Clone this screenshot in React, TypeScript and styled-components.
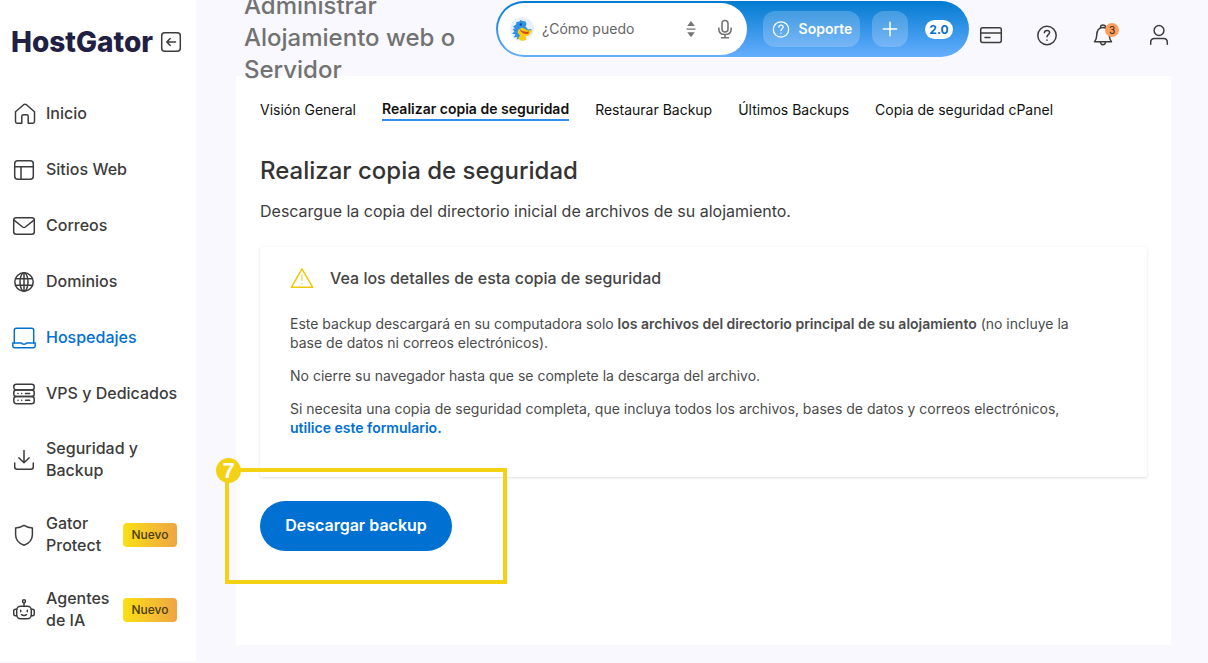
import React from 'react';
import styled, { createGlobalStyle, css } from 'styled-components';

const GlobalStyle = createGlobalStyle`
  * { box-sizing: border-box; }
  body {
    margin: 0;
    background: #f8f8fe;
    color: #3c3c3c;
    font-family: Inter, "Liberation Sans", sans-serif;
    font-size: 16px;
  }
  h1, h2, h3, p, ul { margin: 0; padding: 0; }
  button { font-family: inherit; border: 0; padding: 0; background: none; cursor: pointer; }
`;

const Shell = styled.div`
  display: grid;
  grid-template-columns: 196px minmax(0, 1fr);
  min-height: 100vh;
  overflow: hidden;
`;

const Sidebar = styled.aside`
  background: #fff;
  border-bottom: 1px solid #f3f4f8;
`;

const Brand = styled.div`
  display: flex;
  align-items: center;
  gap: 6px;
  height: 86px;
  padding: 0 0 3px 11px;
`;

const Logo = styled.a`
  color: #1f2044;
  font-size: 28px;
  line-height: 32px;
  font-weight: 800;
  text-decoration: none;
`;

const CollapseButton = styled.button`
  display: flex;
  color: #3c3c3c;
`;

const Menu = styled.ul`
  list-style: none;
`;

const MenuLink = styled.a<{ $active?: boolean; $tall?: boolean }>`
  display: flex;
  align-items: center;
  gap: 10px;
  min-height: ${(p) => (p.$tall ? 75 : 56)}px;
  padding-left: 12px;
  color: ${(p) => (p.$active ? '#0070d2' : '#3c3c3c')};
  font-size: 16px;
  line-height: 22px;
  font-weight: 500;
  text-decoration: none;
  svg { flex: none; }
`;

const MenuLabel = styled.span`
  flex: 1;
  max-width: 140px;
  padding-bottom: 2px;
`;

const NewTag = styled.span`
  width: 54px;
  margin-right: 19px;
  border-radius: 4px;
  background: linear-gradient(90deg, #fae014, #efa544);
  color: #4a3b0a;
  font-size: 12px;
  line-height: 24px;
  text-align: center;
`;

const Content = styled.div`
  display: flex;
  flex-direction: column;
  min-width: 0;
`;

const Header = styled.header`
  position: relative;
  z-index: 1;
  display: flex;
  align-items: center;
  height: 76px;
  padding: 0 37px 0 48px;
`;

const PageTitle = styled.h1`
  flex: 1;
  padding-right: 24px;
  color: #727272;
  font-size: 24px;
  line-height: 32px;
  font-weight: 500;
`;

const Assistant = styled.div`
  display: flex;
  align-self: flex-start;
  align-items: center;
  width: 473px;
  height: 56px;
  margin-top: 1px;
  padding-left: 2px;
  border-radius: 28px;
  background: linear-gradient(180deg, #027bd0, #66aeff);
`;

const Ask = styled.label`
  display: flex;
  align-items: center;
  width: 249px;
  height: 52px;
  padding: 0 14px 0 12px;
  border-radius: 26px;
  background: #fff;
  color: #757575;
  svg { flex: none; }
`;

const AskInput = styled.input`
  flex: 1;
  min-width: 0;
  margin-left: 8px;
  padding: 0;
  border: 0;
  outline: 0;
  background: none;
  color: #666;
  font: 400 14px/20px Inter, "Liberation Sans", sans-serif;
  &::placeholder { color: #666; opacity: 1; }
`;

const MicButton = styled.button`
  display: flex;
  margin-left: 19px;
  color: #757575;
`;

const GlassButton = styled.button<{ $icon?: boolean }>`
  display: flex;
  align-items: center;
  justify-content: center;
  gap: 8px;
  width: ${(p) => (p.$icon ? 36 : 97)}px;
  height: 36px;
  margin-left: ${(p) => (p.$icon ? 12 : 16)}px;
  border-radius: 12px;
  background: rgba(255, 255, 255, 0.2);
  color: #fff;
  font-size: 14px;
  line-height: 20px;
  font-weight: 600;
`;

const Version = styled.span`
  width: 28px;
  margin-left: 17px;
  border-radius: 10px;
  background: #fff;
  color: #0b6fc4;
  font-size: 12px;
  line-height: 19px;
  font-weight: 700;
  text-align: center;
`;

const HeaderActions = styled.nav`
  display: flex;
  gap: 32px;
  margin-left: 10px;
`;

const IconButton = styled.button`
  position: relative;
  display: flex;
  color: #3c3c3c;
  padding-bottom: 6px;
`;

const Count = styled.span`
  position: absolute;
  top: 0;
  right: -4px;
  width: 14px;
  border-radius: 7px;
  background: #ff9d5c;
  color: #222;
  font-size: 10px;
  line-height: 14px;
  text-align: center;
`;

const Panel = styled.main`
  flex: 1;
  margin: 0 37px 18px 40px;
  padding: 23px 24px 48px;
  background: #fff;
`;

const Tabs = styled.nav`
  display: flex;
  gap: 26px;
`;

const Tab = styled.a<{ $active?: boolean }>`
  padding-top: 1px;
  color: #111;
  font-size: 14px;
  line-height: 20px;
  text-decoration: none;
  white-space: nowrap;
  ${(p) => p.$active && css`
    padding-top: 0;
    border-bottom: 2px solid #2f8fea;
    font-weight: 600;
  `}
`;

const Heading = styled.h2`
  margin-top: 34px;
  color: #333;
  font-size: 24px;
  line-height: 32px;
  font-weight: 500;
`;

const Lead = styled.p`
  margin-top: 12px;
  line-height: 24px;
`;

const Card = styled.section`
  margin-top: 24px;
  padding: 19px 30px 40px;
  border-radius: 2px;
  box-shadow: 0 1px 3px rgba(0, 0, 0, 0.13);
`;

const CardTitle = styled.h3`
  display: flex;
  align-items: center;
  gap: 16px;
  margin-bottom: 24px;
  color: #444;
  font-size: 16px;
  line-height: 24px;
  font-weight: 500;
`;

const Note = styled.p`
  max-width: 810px;
  margin-bottom: 14px;
  color: #4b4b4b;
  font-size: 14px;
  line-height: 19px;
  &:last-child { margin-bottom: 0; }
  strong { font-weight: 600; }
`;

const NoteLink = styled.a`
  color: #0070d2;
  font-weight: 600;
  text-decoration: none;
`;

const Action = styled.div`
  position: relative;
  display: inline-block;
  margin-top: 24px;
`;

const PrimaryButton = styled.button`
  width: 192px;
  height: 50px;
  padding-bottom: 2px;
  border-radius: 25px;
  background: #0070d2;
  color: #fff;
  font-size: 16px;
  font-weight: 600;
`;

const Highlight = styled.div`
  position: absolute;
  inset: -33px -55px -33px -35px;
  border: 4px solid #f3d114;
  pointer-events: none;
`;

const Step = styled.span`
  position: absolute;
  top: -14px;
  left: -13px;
  width: 25px;
  border-radius: 50%;
  background: #f3d114;
  color: #fff;
  font: 700 22px/25px "Liberation Sans", sans-serif;
  text-align: center;
`;

type IconProps = { children: React.ReactNode; size?: number; stroke?: number; color?: string };

const Icon = ({ children, size = 24, stroke = 1.5, color = 'currentColor' }: IconProps) => (
  <svg width={size} height={size} viewBox="0 0 24 24" fill="none" stroke={color} strokeWidth={stroke}
    strokeLinecap="round" strokeLinejoin="round" aria-hidden="true">
    {children}
  </svg>
);

const icons = {
  home: <path d="M3.500 9.800 11.600 2.700Q13 1.700 14.400 2.700L22.500 9.800V19.500Q22.500 21.200 20.800 21.200H16.200V14.300Q16.200 12.700 14.600 12.700H11.400Q9.800 12.700 9.800 14.300V21.200H5.200Q3.500 21.200 3.500 19.500Z" />,
  sites: <><rect x="2.700" y="2.700" width="18.600" height="18.600" rx="3" /><path d="M2.700 8.800H21.300M9 8.800V21.300" /></>,
  mail: <><rect x="1.700" y="3.700" width="20.600" height="16.500" rx="2.500" /><path d="m2.300 6.300 8.300 6.700q1.400 1 2.800 0l8.300-6.700" /></>,
  globe: <><circle cx="12" cy="12" r="9.200" /><ellipse cx="12" cy="12" rx="4" ry="9.200" /><path d="M3.600 8.800h16.800M3.600 15.200h16.800M12 2.800v18.400" /></>,
  hosting: <><path d="M2.300 16.700V4.300q0-2 2-2h15.400q2 0 2 2v12.400" /><path d="M.8 16.900h8.600q.6 1.300 2.600 1.300t2.600-1.300h8.600v3.200q0 1.700-1.700 1.700h-19Q.8 21.800.8 20.100Z" /></>,
  servers: <><rect x="1.800" y="2.300" width="20.400" height="5.700" rx="2.500" /><rect x="1.800" y="8" width="20.400" height="6.600" rx="2.500" /><rect x="1.800" y="14.600" width="20.400" height="7.200" rx="2.500" /><path d="M6 11.400h.1M9.600 11.400h.1M13.500 11.400h4.200M6 18.300h.1M9.600 18.300h.1M13.500 18.300h4.200" /></>,
  download: <path d="M12 2.500v12.200M6.800 9.800l5.200 5 5.200-5M2.700 15v3.700q0 2.500 2.500 2.500h13.600q2.500 0 2.500-2.500V15" />,
  shield: <path d="M12 2.300Q16 4.800 20.400 5V11.500C20.400 17 16.800 20.500 12 22.200 7.200 20.500 3.600 17 3.600 11.500V5Q8 4.800 12 2.300Z" />,
  robot: <><circle cx="12" cy="3.200" r="1.500" /><path d="M12 4.800v3.400M4.700 11.200H3.500q-1.800 0-1.800 2v2.600q0 2 1.800 2h1.200M19.300 11.200h1.200q1.800 0 1.800 2v2.600q0 2-1.800 2h-1.200M8.700 12.300v1.400M15.300 12.300v1.400M9.400 16.700q2.600 1.700 5.200 0" /><rect x="4.700" y="8.200" width="14.600" height="12.600" rx="4" /></>,
  collapse: <><rect x="2.700" y="2.700" width="18.600" height="18.600" rx="3" /><path d="M16.500 12H8M11.200 8.500 7.800 12l3.400 3.500" /></>,
  card: <><rect x="1.700" y="4.700" width="20.600" height="14.800" rx="2" /><path d="M1.700 10h20.600M6 14.400h5" /></>,
  help: <><circle cx="12" cy="12.500" r="9.200" /><path d="M9.400 9.800q.1-2.400 2.600-2.400t2.600 2.200c0 2-2.600 2-2.600 4.200M12 17v.2" /></>,
  bell: <><path d="M9.600 4.600V3.800q0-1.800 2.400-1.800t2.400 1.800v.8M3.500 18.700H20.500C19 17 18.400 16 18.300 12.500 18.200 7.500 16.500 4.600 12 4.600S5.800 7.500 5.700 12.500C5.600 16 5 17 3.500 18.700Z" /><path d="M9.500 19q.2 2.700 2.500 2.700t2.500-2.700" /></>,
  user: <><circle cx="12" cy="7.500" r="4.900" /><path d="M3.700 21.300v-2q0-3.800 3.800-3.800h9q3.800 0 3.800 3.800v2" /></>,
  warning: <><path d="M12 2.900 22.700 21.300H1.300Z" /><path d="M12 9.300v5M12 17.500v.2" strokeOpacity=".65" /></>,
  plus: <path d="M12 4v16M4 12h16" />,
};

const Mascot = () => (
  <svg width="24" height="24" viewBox="0 0 24 24" aria-hidden="true">
    <circle cx="12" cy="12" r="12" fill="#e8f0fd" />
    <path d="M3 9.500 6 7.500 6.500 5 9 4.800 10.500 3 12.500 4 15.500 4.500 16.500 7 15.500 9.500 18 12.500 21.500 12 21 15 14 18.500 10 21.500 6.500 22.500 7.500 20 3.500 20.500 5.500 17.500 2 16.500 4.500 14.500 2.500 12 5 11.500Z" fill="#2f92e6" />
    <path d="M8.500 12.500 12 10.500 18.500 13.800 21.500 12.500 21.800 15 19 18.500 15.500 19.500 16.500 22.500 12.500 24 8 22 10 18.500 7.500 15.500Z" fill="#fccc14" />
    <path d="M9.500 12Q13 15.800 19 14.500L18.500 16.800Q12 18 9.500 12Z" fill="#d44a1e" />
    <circle cx="10.800" cy="7.500" r="1.200" fill="#17457d" />
  </svg>
);

const Stepper = () => (
  <svg width="14" height="20" viewBox="0 0 14 20" fill="#757575" aria-hidden="true">
    <path d="M3.200 7 7 2l3.800 5ZM3.200 13.200h7.600L7 18.200ZM2.500 9.600h9v1.100h-9Z" />
  </svg>
);

const MicIcon = () => (
  <svg width="16" height="20" viewBox="0 0 16 20" fill="none" stroke="currentColor" strokeWidth="1.600" aria-hidden="true">
    <rect x="5" y="1.500" width="6" height="11.500" rx="3" />
    <path d="M1.800 8.500v1.200Q1.800 15.500 8 15.500t6.200-5.800V8.500M8 15.500V18.800M4 18.800h8" />
  </svg>
);

const menu = [
  { label: 'Inicio', icon: icons.home },
  { label: 'Sitios Web', icon: icons.sites },
  { label: 'Correos', icon: icons.mail },
  { label: 'Dominios', icon: icons.globe },
  { label: 'Hospedajes', icon: icons.hosting, active: true },
  { label: 'VPS y Dedicados', icon: icons.servers },
  { label: 'Seguridad y Backup', icon: icons.download, tall: true },
  { label: 'Gator Protect', icon: icons.shield, tall: true, isNew: true },
  { label: 'Agentes de IA', icon: icons.robot, tall: true, isNew: true },
];

const tabs = ['Visión General', 'Realizar copia de seguridad', 'Restaurar Backup', 'Últimos Backups', 'Copia de seguridad cPanel'];

export default function App() {
  return (
    <>
      <GlobalStyle />
      <Shell>
        <Sidebar>
          <Brand>
            <Logo href="#inicio">HostGator</Logo>
            <CollapseButton aria-label="Contraer menú"><Icon>{icons.collapse}</Icon></CollapseButton>
          </Brand>
          <Menu>
            {menu.map((item) => (
              <li key={item.label}>
                <MenuLink href="#menu" $active={item.active} $tall={item.tall}>
                  <Icon>{item.icon}</Icon>
                  <MenuLabel>{item.label}</MenuLabel>
                  {item.isNew && <NewTag>Nuevo</NewTag>}
                </MenuLink>
              </li>
            ))}
          </Menu>
        </Sidebar>
        <Content>
          <Header>
            <PageTitle>Administrar Alojamiento web o Servidor</PageTitle>
            <Assistant>
              <Ask>
                <Mascot />
                <AskInput placeholder="¿Cómo puedo" aria-label="Pregunta" />
                <Stepper />
                <MicButton aria-label="Dictar"><MicIcon /></MicButton>
              </Ask>
              <GlassButton><Icon size={20}>{icons.help}</Icon>Soporte</GlassButton>
              <GlassButton $icon aria-label="Agregar"><Icon size={20} stroke={1.8}>{icons.plus}</Icon></GlassButton>
              <Version>2.0</Version>
            </Assistant>
            <HeaderActions>
              <IconButton aria-label="Pagos"><Icon>{icons.card}</Icon></IconButton>
              <IconButton aria-label="Ayuda"><Icon>{icons.help}</Icon></IconButton>
              <IconButton aria-label="Notificaciones"><Icon>{icons.bell}</Icon><Count>3</Count></IconButton>
              <IconButton aria-label="Cuenta"><Icon>{icons.user}</Icon></IconButton>
            </HeaderActions>
          </Header>
          <Panel>
            <Tabs>
              {tabs.map((tab, i) => <Tab key={tab} href="#tab" $active={i === 1}>{tab}</Tab>)}
            </Tabs>
            <Heading>Realizar copia de seguridad</Heading>
            <Lead>Descargue la copia del directorio inicial de archivos de su alojamiento.</Lead>
            <Card>
              <CardTitle><Icon color="#f0c808">{icons.warning}</Icon>Vea los detalles de esta copia de seguridad</CardTitle>
              <Note>
                Este backup descargará en su computadora solo <strong>los archivos del directorio principal de su alojamiento</strong> (no incluye la base de datos ni correos electrónicos).
              </Note>
              <Note>No cierre su navegador hasta que se complete la descarga del archivo.</Note>
              <Note>
                Si necesita una copia de seguridad completa, que incluya todos los archivos, bases de datos y correos electrónicos, <NoteLink href="#formulario">utilice este formulario.</NoteLink>
              </Note>
            </Card>
            <Action>
              <PrimaryButton>Descargar backup</PrimaryButton>
              <Highlight><Step>7</Step></Highlight>
            </Action>
          </Panel>
        </Content>
      </Shell>
    </>
  );
}
